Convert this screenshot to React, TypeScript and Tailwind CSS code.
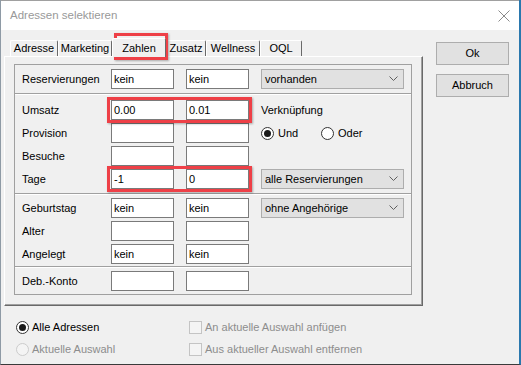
import React from "react";

function Field({ value = "" }: { value?: string }) {
  return (
    <div className="flex h-[20px] w-[63px] items-center border border-[#7a7a7a] bg-white pl-[2px]">
      {value}
    </div>
  );
}

function Combo({ value }: { value: string }) {
  return (
    <div className="flex h-[20px] w-[143px] items-center justify-between border border-[#adadad] bg-[#e1e1e1] pl-[3px] pr-[5px]">
      <span>{value}</span>
      <svg width="9" height="6" viewBox="0 0 9 6">
        <polyline points="0.5,0.5 4.5,4.5 8.5,0.5" fill="none" stroke="#606060" strokeWidth="1" />
      </svg>
    </div>
  );
}

function Radio({ checked, disabled }: { checked?: boolean; disabled?: boolean }) {
  return (
    <span
      className={
        disabled
          ? "flex h-[13px] w-[13px] items-center justify-center rounded-full border border-[#cccccc] bg-[#f4f4f4]"
          : "flex h-[13px] w-[13px] items-center justify-center rounded-full border border-[#333333] bg-white"
      }
    >
      {checked && <span className="h-[7px] w-[7px] rounded-full bg-[#1a1a1a]" />}
    </span>
  );
}

function Row({ label, a, b, right }: { label: string; a?: string; b?: string; right?: React.ReactNode }) {
  return (
    <div className="flex h-[20px] items-center">
      <div className="w-[89px]">{label}</div>
      <Field value={a} />
      <div className="w-[12px]" />
      <Field value={b} />
      <div className="w-[12px]" />
      <div className="flex items-center">{right}</div>
    </div>
  );
}

function Sep() {
  return <div className="h-[2px] border-t border-b border-t-[#a0a0a0] border-b-white" />;
}

const tabs = [
  { name: "Adresse", w: "w-[48px]" },
  { name: "Marketing", w: "w-[54px]" },
  { name: "Zahlen", w: "w-[54px]", active: true },
  { name: "Zusatz", w: "w-[40px]" },
  { name: "Wellness", w: "w-[54px]" },
  { name: "OQL", w: "w-[42px]" },
];

export default function App() {
  return (
    <div className="relative h-[365px] w-[521px] overflow-hidden border-l border-r-2 border-b border-l-[#8e9aa5] border-r-[#2a78ae] border-b-[#3a3a3a] bg-[#f0f0f0] font-['Liberation_Sans',Arial,sans-serif] text-[11px] text-black">
      {/* title bar */}
      <div className="flex h-[30px] items-center justify-between border-t border-[#a0a0a0] bg-white pl-[9px] pr-[9px]">
        <span className="text-[11.5px] text-[#999999]">Adressen selektieren</span>
        <svg width="12" height="12" viewBox="0 0 12 12">
          <path d="M0.5 0.5 L11.5 11.5 M11.5 0.5 L0.5 11.5" stroke="#8a8a8a" strokeWidth="1" />
        </svg>
      </div>

      <div className="flex">
        <div className="ml-[3px] w-[419px]">
          {/* tabs */}
          <div className="mt-[8px] flex h-[18px] items-end pl-[6px]">
            {tabs.map((t) =>
              t.active ? (
                <div
                  key={t.name}
                  className={`relative z-10 -mb-px flex h-[19px] items-center justify-center rounded-t-[2px] border-t border-l border-r border-t-white border-l-white border-r-[#696969] bg-[#f0f0f0] ${t.w}`}
                >
                  {t.name}
                </div>
              ) : (
                <div
                  key={t.name}
                  className={`flex h-[16px] items-center justify-center rounded-t-[2px] border-t border-l border-r border-t-white border-l-white border-r-[#696969] ${t.w}`}
                >
                  {t.name}
                </div>
              )
            )}
          </div>

          {/* panel */}
          <div className="h-[250px] border-t border-l border-r border-b border-t-white border-l-white border-r-[#696969] border-b-[#696969] px-[9px] pt-[7px] shadow-[inset_-1px_-1px_0_#a0a0a0]">
            <div className="w-[398px] border border-[#a0a0a0]">
              <div className="pl-[7px] pt-[4px] pb-[4px]">
                <Row label="Reservierungen" a="kein" b="kein" right={<Combo value="vorhanden" />} />
              </div>
              <Sep />
              <div className="flex flex-col gap-[3px] pl-[7px] pt-[5px] pb-[4px]">
                <Row label="Umsatz" a="0.00" b="0.01" right={<span>Verknüpfung</span>} />
                <Row
                  label="Provision"
                  right={
                    <div className="flex items-center">
                      <Radio checked />
                      <span className="ml-[4px] w-[43px]">Und</span>
                      <Radio />
                      <span className="ml-[4px]">Oder</span>
                    </div>
                  }
                />
                <Row label="Besuche" />
                <Row label="Tage" a="-1" b="0" right={<Combo value="alle Reservierungen" />} />
              </div>
              <Sep />
              <div className="flex flex-col gap-[3px] pl-[7px] pt-[3px] pb-[2px]">
                <Row label="Geburtstag" a="kein" b="kein" right={<Combo value="ohne Angehörige" />} />
                <Row label="Alter" />
                <Row label="Angelegt" a="kein" b="kein" />
              </div>
              <Sep />
              <div className="pl-[7px] pt-[3px] pb-[3px]">
                <Row label="Deb.-Konto" />
              </div>
            </div>
          </div>
        </div>

        {/* buttons */}
        <div className="ml-[13px] flex flex-col gap-[9px] pt-[12px]">
          <div className="flex h-[23px] w-[73px] items-center justify-center border border-[#adadad] bg-[#e1e1e1]">Ok</div>
          <div className="flex h-[23px] w-[73px] items-center justify-center border border-[#adadad] bg-[#e1e1e1]">Abbruch</div>
        </div>
      </div>

      {/* bottom options */}
      <div className="ml-[15px] mt-[13px] flex">
        <div className="flex w-[173px] flex-col gap-[6px]">
          <div className="flex h-[16px] items-center">
            <Radio checked />
            <span className="ml-[3px]">Alle Adressen</span>
          </div>
          <div className="flex h-[16px] items-center text-[#8d8d8d]">
            <Radio disabled />
            <span className="ml-[3px]">Aktuelle Auswahl</span>
          </div>
        </div>
        <div className="flex flex-col gap-[6px] text-[#8d8d8d]">
          <div className="flex h-[16px] items-center">
            <span className="h-[13px] w-[13px] border border-[#c4c4c4] bg-[#f4f4f4]" />
            <span className="ml-[3px]">An aktuelle Auswahl anfügen</span>
          </div>
          <div className="flex h-[16px] items-center">
            <span className="h-[13px] w-[13px] border border-[#c4c4c4] bg-[#f4f4f4]" />
            <span className="ml-[3px]">Aus aktueller Auswahl entfernen</span>
          </div>
        </div>
      </div>

      {/* highlight marks */}
      <div className="pointer-events-none absolute left-[113px] top-[33px] h-[27px] w-[54px] border-[3px] border-[#ee4047] shadow-[1px_1px_2px_rgba(0,0,0,0.3)]" />
      <div className="pointer-events-none absolute left-[106px] top-[97px] h-[26px] w-[145px] border-[3px] border-[#ee4047] shadow-[1px_1px_2px_rgba(0,0,0,0.3)]" />
      <div className="pointer-events-none absolute left-[106px] top-[166px] h-[26px] w-[145px] border-[3px] border-[#ee4047] shadow-[1px_1px_2px_rgba(0,0,0,0.3)]" />
    </div>
  );
}
